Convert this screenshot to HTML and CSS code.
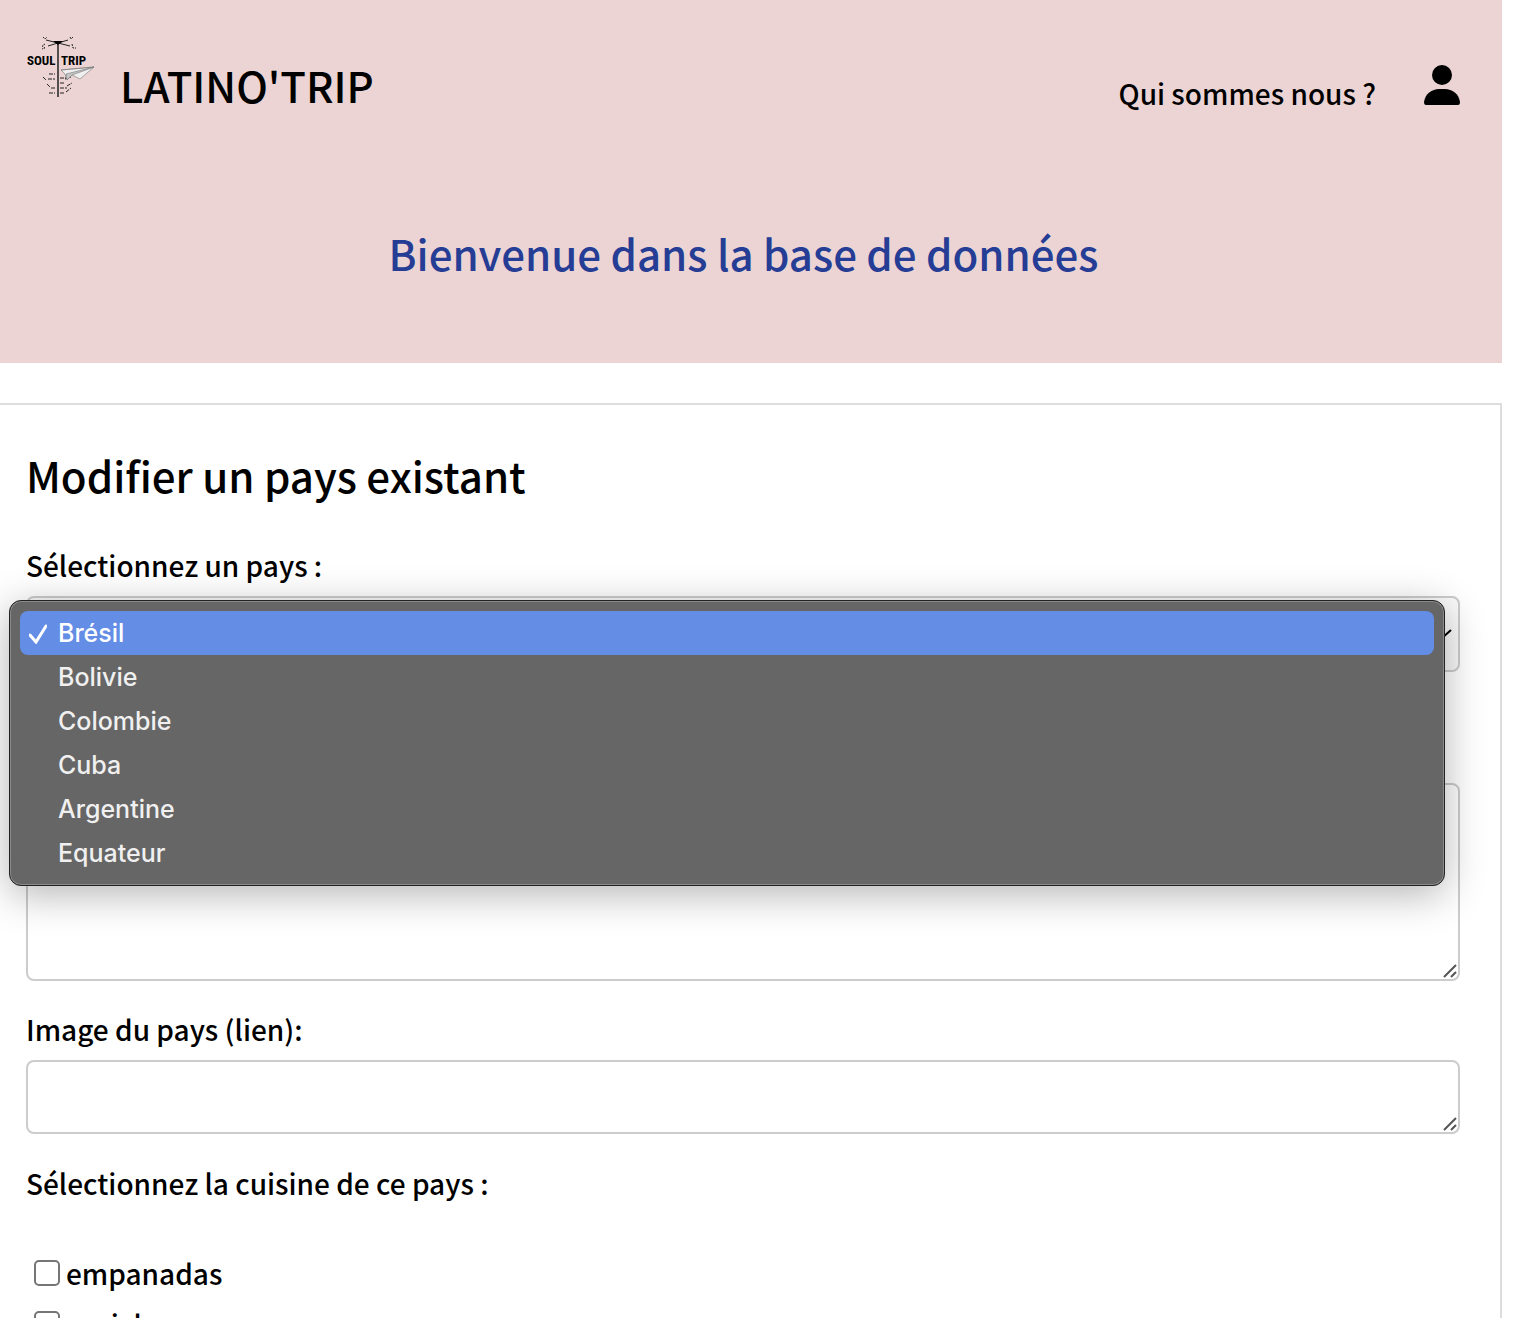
FILE: index.html
```html
<!DOCTYPE html>
<html lang="fr">
<head>
<meta charset="utf-8">
<title>Latino'Trip</title>
<link rel="stylesheet" href="styles.css">
</head>
<body>
<div class="page">
  <header class="banner">
    <nav class="navbar">
      <a class="brand" href="#">
        <svg class="logo" viewBox="0 0 68 64" aria-hidden="true">
          <g class="logo-lines">
            <path d="M31 7v54" stroke-width="1.5"/>
            <path d="M31 7L19 4M31 7L41 4M31 7L21 10M31 7L43 10"/>
            <path d="M16 1l2 2 2-2M43 1l1 2 2-2M18 8l-3 2 3 2-3 1M45 8l1 4h3" stroke-dasharray="2 1"/>
            <path d="M22 38h6M16 41l3 3M21 43h7M20 48l3 3M24 52h4M22 57h6M33 42h6M33 47h5M33 52h7M33 57h5M38 43l6-2M40 50l5-3M39 56l5-4" stroke-dasharray="4 1"/>
          </g>
          <path d="M26 5h10l-5 4z"/>
          <text class="logo-text" x="0" y="29">SOUL</text>
          <text class="logo-text" x="34" y="29">TRIP</text>
          <path d="M34 34L67 31L53 43L45 39L40 44L38 38Z" fill="#f0f0f0" stroke="#777" stroke-width=".6"/>
          <path d="M34 34L67 31L39 38L40 44L45 39L67 31" fill="#c5c5c5" stroke="#777" stroke-width=".6"/>
        </svg>
        <span class="brand-name">LATINO'TRIP</span>
      </a>
      <div class="nav-links">
        <a class="nav-link" href="#">Qui sommes nous ?</a>
        <a class="account" href="#" aria-label="Compte">
          <svg viewBox="0 0 36 40" width="36" height="40"><circle cx="18" cy="10" r="10"/><path d="M2 40Q0 40 0 37C1 29 8 24 15 24H21C28 24 35 29 36 37Q36 40 34 40Z"/></svg>
        </a>
      </div>
    </nav>
    <h1 class="welcome">Bienvenue dans la base de données</h1>
  </header>

  <main class="panel">
    <h2 class="panel-title">Modifier un pays existant</h2>
    <form class="form">
      <div class="field">
        <label class="label" for="pays">Sélectionnez un pays :</label>
        <div class="control">
          <select class="box select" id="pays"><option></option></select>
          <svg class="chevron" viewBox="0 0 20 10" width="20" height="10"><path d="M1 1l9 8 9-8"/></svg>
          <ul class="menu">
            <li class="item selected"><svg class="check" viewBox="0 0 18 20" width="18" height="20"><path d="M1 11l6 7L17 2"/></svg>Brésil</li>
            <li class="item">Bolivie</li>
            <li class="item">Colombie</li>
            <li class="item">Cuba</li>
            <li class="item">Argentine</li>
            <li class="item">Equateur</li>
          </ul>
        </div>
      </div>
      <div class="control description">
        <textarea class="box area tall" aria-label="Description"></textarea>
        <svg class="grip" viewBox="0 0 14 14" width="14" height="14"><path d="M1 13L13 1M8 13l5-5"/></svg>
      </div>
      <div class="field">
        <label class="label" for="image">Image du pays (lien):</label>
        <div class="control">
          <textarea class="box area" id="image"></textarea>
          <svg class="grip" viewBox="0 0 14 14" width="14" height="14"><path d="M1 13L13 1M8 13l5-5"/></svg>
        </div>
      </div>
      <fieldset class="dishes">
        <legend class="label">Sélectionnez la cuisine de ce pays :</legend>
        <label class="dish"><input class="tick" type="checkbox">empanadas</label>
        <label class="dish"><input class="tick" type="checkbox">ceviche</label>
      </fieldset>
    </form>
  </main>
</div>
</body>
</html>
```

FILE: styles.css
```css
* { box-sizing: border-box; }

body {
  margin: 0;
  background: #fff;
  color: #000;
  font-family: "Noto Sans CJK SC", "Noto Sans", sans-serif;
  font-size: 28px;
  font-weight: 500;
  line-height: 44px;
}

a { color: inherit; text-decoration: none; }

.page {
  height: calc(100vh - 7px);
  margin-right: 11px;
  overflow: hidden;
}

.banner {
  padding: 36px 42px 76px 27px;
  background: #ecd4d4;
}

.navbar, .brand, .nav-links { display: flex; }
.navbar { justify-content: space-between; }
.brand { gap: 25px; }
.logo { width: 68px; height: 64px; }
.logo-lines { fill: none; stroke: #222; stroke-width: 1; }
.logo-text {
  font-family: "Roboto Condensed", "Open Sans Condensed", "Liberation Sans", sans-serif;
  font-size: 13px;
  font-weight: 700;
}
.brand-name { padding-top: 19px; font-size: 42px; line-height: 60px; }
.nav-links { gap: 48px; padding-top: 29px; }
.nav-link { padding-top: 6px; }
.account svg { display: block; }

.welcome {
  margin: 104px 0 0;
  color: #253d94;
  font-size: 42px;
  font-weight: 500;
  line-height: 68px;
  text-align: center;
}

.panel {
  margin-top: 40px;
  padding: 36px 40px 40px 26px;
  border: 2px solid #ddd;
  border-left: 0;
}

.panel-title {
  margin: 0;
  font-size: 42px;
  font-weight: 500;
  line-height: 68px;
}

.form { margin-top: 34px; }
.label { display: block; padding: 0; margin-bottom: 9px; }
.control { position: relative; }

.box {
  display: block;
  width: 100%;
  height: 74px;
  border: 2px solid #ccc;
  border-radius: 8px;
  background: #fff;
}
.select { appearance: none; height: 76px; background: #fafafa; }
.area { resize: none; }
.tall { height: 198px; }
.description { margin: 111px 0 26px; }

.chevron {
  position: absolute;
  right: 8px;
  top: 33px;
  fill: none;
  stroke: #000;
  stroke-width: 2;
}
.grip {
  position: absolute;
  right: 3px;
  bottom: 3px;
  fill: none;
  stroke: #555;
  stroke-width: 2;
}

.menu {
  position: absolute;
  z-index: 1;
  top: 4px;
  left: -17px;
  right: 15px;
  margin: 0;
  padding: 10px;
  border: 1px solid #222;
  border-radius: 12px;
  background: #666;
  box-shadow: inset 0 0 0 1px #8a8a8a, 0 8px 40px rgba(0, 0, 0, .3);
  color: #f0f0f0;
  font-family: Inter, sans-serif;
  font-size: 25px;
  list-style: none;
}
.item { position: relative; padding-left: 38px; border-radius: 8px; }
.selected { background: #648de5; color: #fff; }
.check {
  position: absolute;
  left: 9px;
  top: 13px;
  fill: none;
  stroke: #fff;
  stroke-width: 3;
  stroke-linecap: round;
}

.dishes { margin: 27px 0 0; padding: 0; border: 0; }
.dishes .label { margin-bottom: 46px; }
.dish { display: flex; gap: 6px; height: 51px; padding-left: 8px; }
.tick {
  appearance: none;
  width: 26px;
  height: 26px;
  margin: 9px 0 0;
  border: 2px solid #767676;
  border-radius: 5px;
  background: #fff;
}
```
